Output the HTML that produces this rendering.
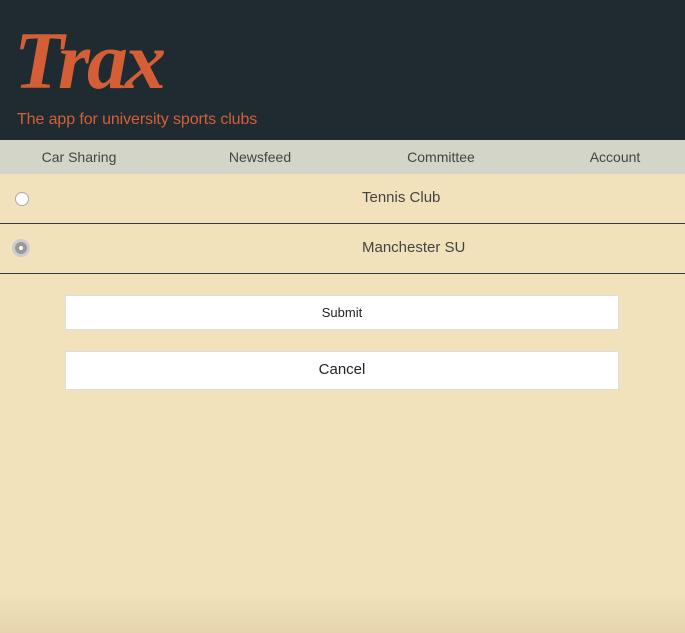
<!DOCTYPE html>
<html><head><style>
body{margin:0;width:685px;height:633px;background:#f2e2bc;font-family:"Liberation Sans",sans-serif;overflow:hidden;position:relative}
.hdr{height:140px;background:#1f2b30;position:relative}
.logo{position:absolute;left:14px;top:16px;font-family:"Liberation Serif",serif;font-style:italic;font-weight:bold;font-size:82px;color:#d45f37;letter-spacing:-3px;line-height:90px}
.tag{position:absolute;left:17px;top:111px;font-size:16px;letter-spacing:-0.1px;color:#d45f37}
.nav{height:34px;background:#d3d5c8;position:relative;font-size:14px;color:#444}
.nav span{position:absolute;top:9px;transform:translateX(-50%)}
.row{height:49px;border-bottom:1px solid #3a3a3a;position:relative;font-size:15px;color:#444}
.row .t{position:absolute;left:362px;top:15px}
.r{position:absolute;left:15px;width:12px;height:12px;border-radius:50%;background:#fff;border:1px solid #aaa;top:18px}
.r2{left:12px;background:#999;border:3px solid #ccc;top:15px;box-sizing:content-box;width:12px;height:12px}
.r2:after{content:"";position:absolute;left:4px;top:4px;width:4px;height:4px;background:#fff;border-radius:50%}
.btn{position:absolute;left:65px;width:552px;background:#fff;border:1px solid #ddd;text-align:center;color:#222}
.shade{position:absolute;left:0;right:0;bottom:0;height:40px;background:linear-gradient(#f2e2bc00,#e5d4ac)}
</style></head><body>
<div class="hdr"><div class="logo">Trax</div><div class="tag">The app for university sports clubs</div></div>
<div class="nav"><span style="left:79px">Car Sharing</span><span style="left:260px">Newsfeed</span><span style="left:441px">Committee</span><span style="left:615px">Account</span></div>
<div class="row"><div class="r"></div><div class="t">Tennis Club</div></div>
<div class="row"><div class="r r2"></div><div class="t">Manchester SU</div></div>
<div class="btn" style="top:295px;height:33px;line-height:33px;font-size:13px">Submit</div>
<div class="btn" style="top:351px;height:37px;line-height:35px;font-size:15px">Cancel</div>
<div class="shade"></div>
</body></html>
